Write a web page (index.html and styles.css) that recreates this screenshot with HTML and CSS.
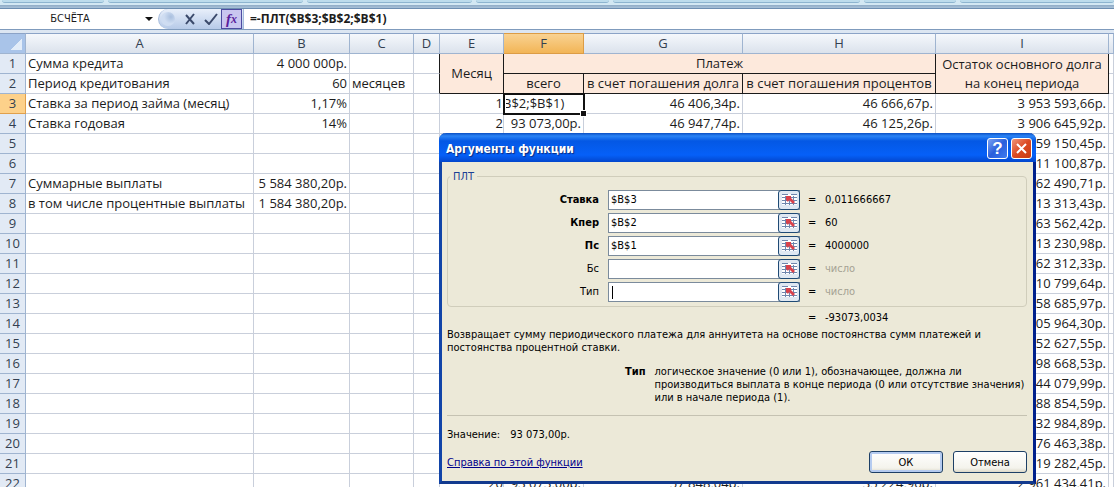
FILE: index.html
```
<!DOCTYPE html>
<html lang="ru">

<head>
    <meta charset="UTF-8">
    <meta name="viewport" content="width=device-width, initial-scale=1.0">
    <title>Расчёт кредита</title>
    <link rel="stylesheet" href="styles.css">
</head>

<body>
    <!-- Icon shared by the range pickers -->
    <svg width="0" height="0" class="sprite" aria-hidden="true">
        <symbol id="range-icon" viewBox="0 0 17 13">
            <rect x="1" y="1" width="15" height="11" fill="#fff" />
            <path d="M1 1.5h6M10 1.5h6M1 4.5h15M1 7.5h15M1 10.500h15M4.500 3v9M8.500 3v9M12.500 3v9" stroke="#6f86ad" fill="none" />
            <path d="M5 3h5v2l4 4-2 2-4-4-1 2-2-2z" fill="#d9424c" />
        </symbol>
    </svg>

    <div class="ribbon-edge"><span></span><span></span><span></span><span></span><span></span><span></span><span></span></div>

    <div class="formula-bar">
        <div class="name-box">
            <input type="text" class="name-input" value="БСЧЁТА" aria-label="Имя">
            <button class="name-arrow" aria-label="Список имён"></button>
        </div>
        <div class="formula-tools">
            <span class="knob"></span>
            <button aria-label="Отмена ввода">
                <svg width="12" height="12" viewBox="0 0 12 12"><path d="M2 2l8 9M10 1L2 11" stroke="#3b4a6b" stroke-width="2" fill="none" /></svg>
            </button>
            <button aria-label="Ввод">
                <svg width="14" height="12" viewBox="0 0 14 12"><path d="M1 7l4 4 8-10" stroke="#3b4a6b" stroke-width="2" fill="none" /></svg>
            </button>
            <button class="fx" aria-label="Вставить функцию">f<sub>x</sub></button>
        </div>
        <input type="text" class="formula-input" value="=-ПЛТ($B$3;$B$2;$B$1)" aria-label="Строка формул">
    </div>

    <main class="workbook">
        <table class="sheet">
            <colgroup>
                <col class="col-num"><col class="col-a"><col class="col-b"><col class="col-c"><col class="col-d"><col class="col-c"><col class="col-f"><col class="col-g"><col class="col-h"><col class="col-i"><col>
            </colgroup>
            <thead>
                <tr><th class="corner"></th><th>A</th><th>B</th><th>C</th><th>D</th><th>E</th><th class="active">F</th><th>G</th><th>H</th><th>I</th><th></th></tr>
            </thead>
            <tbody>
                <tr><th>1</th><td>Сумма кредита</td><td class="num">4 000 000р.</td><td></td><td class="before"></td><td class="head" rowspan="2">Месяц</td><td class="head" colspan="3">Платеж</td><td class="head double" rowspan="2">Остаток основного долга<br>на конец периода</td><td></td></tr>
                <tr><th>2</th><td>Период кредитования</td><td class="num">60</td><td>месяцев</td><td class="before"></td><td class="head">всего</td><td class="head">в счет погашения долга</td><td class="head">в счет погашения процентов</td><td></td></tr>
                <tr><th class="active">3</th><td>Ставка за период займа (месяц)</td><td class="num">1,17%</td><td></td><td></td><td class="month">1</td><td class="editing"><input type="text" value="B$2;$B$1)" aria-label="F3"></td><td class="num">46 406,34р.</td><td class="num">46 666,67р.</td><td class="num">3 953 593,66р.</td><td></td></tr>
                <tr><th>4</th><td>Ставка годовая</td><td class="num">14%</td><td></td><td></td><td class="month">2</td><td class="num">93 073,00р.</td><td class="num">46 947,74р.</td><td class="num">46 125,26р.</td><td class="num">3 906 645,92р.</td><td></td></tr>
                <tr><th>5</th><td></td><td></td><td></td><td></td><td></td><td></td><td></td><td></td><td class="num">3 859 150,45р.</td><td></td></tr>
                <tr><th>6</th><td></td><td></td><td></td><td></td><td></td><td></td><td></td><td></td><td class="num">3 811 100,87р.</td><td></td></tr>
                <tr><th>7</th><td>Суммарные выплаты</td><td class="num">5 584 380,20р.</td><td></td><td></td><td></td><td></td><td></td><td></td><td class="num">3 762 490,71р.</td><td></td></tr>
                <tr><th>8</th><td>в том числе процентные выплаты</td><td class="num">1 584 380,20р.</td><td></td><td></td><td></td><td></td><td></td><td></td><td class="num">3 713 313,43р.</td><td></td></tr>
                <tr><th>9</th><td></td><td></td><td></td><td></td><td></td><td></td><td></td><td></td><td class="num">3 663 562,42р.</td><td></td></tr>
                <tr><th>10</th><td></td><td></td><td></td><td></td><td></td><td></td><td></td><td></td><td class="num">3 613 230,98р.</td><td></td></tr>
                <tr><th>11</th><td></td><td></td><td></td><td></td><td></td><td></td><td></td><td></td><td class="num">3 562 312,33р.</td><td></td></tr>
                <tr><th>12</th><td></td><td></td><td></td><td></td><td></td><td></td><td></td><td></td><td class="num">3 510 799,64р.</td><td></td></tr>
                <tr><th>13</th><td></td><td></td><td></td><td></td><td></td><td></td><td></td><td></td><td class="num">3 458 685,97р.</td><td></td></tr>
                <tr><th>14</th><td></td><td></td><td></td><td></td><td></td><td></td><td></td><td></td><td class="num">3 405 964,30р.</td><td></td></tr>
                <tr><th>15</th><td></td><td></td><td></td><td></td><td></td><td></td><td></td><td></td><td class="num">3 352 627,55р.</td><td></td></tr>
                <tr><th>16</th><td></td><td></td><td></td><td></td><td></td><td></td><td></td><td></td><td class="num">3 298 668,53р.</td><td></td></tr>
                <tr><th>17</th><td></td><td></td><td></td><td></td><td></td><td></td><td></td><td></td><td class="num">3 244 079,99р.</td><td></td></tr>
                <tr><th>18</th><td></td><td></td><td></td><td></td><td></td><td></td><td></td><td></td><td class="num">3 188 854,59р.</td><td></td></tr>
                <tr><th>19</th><td></td><td></td><td></td><td></td><td></td><td></td><td></td><td></td><td class="num">3 132 984,89р.</td><td></td></tr>
                <tr><th>20</th><td></td><td></td><td></td><td></td><td></td><td></td><td></td><td></td><td class="num">3 076 463,38р.</td><td></td></tr>
                <tr><th>21</th><td></td><td></td><td></td><td></td><td></td><td></td><td></td><td></td><td class="num">3 019 282,45р.</td><td></td></tr>
                <tr><th>22</th><td></td><td></td><td></td><td></td><td class="month">20</td><td class="num">93 073,00р.</td><td class="num">57 848,04р.</td><td class="num">35 224,96р.</td><td class="num">2 961 434,41р.</td><td></td></tr>
            </tbody>
        </table>

        <form class="dialog" role="dialog" aria-labelledby="dialog-title">
            <div class="title-bar">
                <h1 id="dialog-title">Аргументы функции</h1>
                <button type="button" class="help" aria-label="Справка">?</button>
                <button type="button" class="close" aria-label="Закрыть">
                    <svg width="13" height="13" viewBox="0 0 13 13"><path d="M2 2l9 9M11 2l-9 9" stroke="#fff" stroke-width="2" /></svg>
                </button>
            </div>

            <div class="dialog-body">
                <fieldset>
                    <legend>ПЛТ</legend>
                    <div class="arg">
                        <label class="required" for="rate">Ставка</label>
                        <div class="ref"><input type="text" id="rate" value="$B$3"><button type="button" aria-label="Выбрать диапазон"><svg width="17" height="13"><use href="#range-icon" /></svg></button></div>
                        <span>=</span><output for="rate">0,011666667</output>
                    </div>
                    <div class="arg">
                        <label class="required" for="nper">Кпер</label>
                        <div class="ref"><input type="text" id="nper" value="$B$2"><button type="button" aria-label="Выбрать диапазон"><svg width="17" height="13"><use href="#range-icon" /></svg></button></div>
                        <span>=</span><output for="nper">60</output>
                    </div>
                    <div class="arg">
                        <label class="required" for="pv">Пс</label>
                        <div class="ref"><input type="text" id="pv" value="$B$1"><button type="button" aria-label="Выбрать диапазон"><svg width="17" height="13"><use href="#range-icon" /></svg></button></div>
                        <span>=</span><output for="pv">4000000</output>
                    </div>
                    <div class="arg">
                        <label for="fv">Бс</label>
                        <div class="ref"><input type="text" id="fv"><button type="button" aria-label="Выбрать диапазон"><svg width="17" height="13"><use href="#range-icon" /></svg></button></div>
                        <span>=</span><output class="hint" for="fv">число</output>
                    </div>
                    <div class="arg">
                        <label for="type">Тип</label>
                        <div class="ref"><input type="text" id="type" class="caret"><button type="button" aria-label="Выбрать диапазон"><svg width="17" height="13"><use href="#range-icon" /></svg></button></div>
                        <span>=</span><output class="hint" for="type">число</output>
                    </div>
                </fieldset>

                <div class="arg total"><span>=</span><output>-93073,0034</output></div>
                <p class="about">Возвращает сумму периодического платежа для аннуитета на основе постоянства сумм платежей и постоянства процентной ставки.</p>
                <dl class="arg-help">
                    <dt>Тип</dt>
                    <dd>логическое значение (0 или 1), обозначающее, должна ли производиться выплата в конце периода (0 или отсутствие значения) или в начале периода (1).</dd>
                </dl>
                <div class="result"><span>Значение:</span><output>93 073,00р.</output></div>
                <div class="actions">
                    <a href="#help">Справка по этой функции</a>
                    <button type="submit" class="default">ОК</button>
                    <button type="button">Отмена</button>
                </div>
            </div>
        </form>
    </main>
</body>

</html>
```
FILE: styles.css
```
* {
    margin: 0;
    padding: 0;
    box-sizing: border-box;
}

body {
    display: flex;
    flex-direction: column;
    height: 100vh;
    overflow: hidden;
    background: #fff;
    color: #1c1c1c;
    font: 13px/20px "Open Sans", "Noto Sans", sans-serif;
}

button,
input {
    font: inherit;
    color: inherit;
    border: none;
    outline: none;
    background: none;
}

.sprite {
    position: absolute;
}

/* Bottom edge of the ribbon */
.ribbon-edge {
    display: flex;
    gap: 4px;
    flex: none;
    height: 9px;
    padding: 0 0 5px 2px;
    background: linear-gradient(#d3e8f3 5px, #8fabc6 5px, #a9c2d8);
    border-bottom: 1px solid #6e8fb2;
}

.ribbon-edge span {
    flex: 102 1 0;
    background: #bddcec;
    border-bottom: 1px solid #8db4cf;
    border-radius: 0 0 3px 3px;
}

.ribbon-edge span:nth-child(2) {
    flex-grow: 195;
}

.ribbon-edge span:nth-child(3) {
    flex-grow: 165;
}

.ribbon-edge span:nth-child(4) {
    flex-grow: 134;
}

.ribbon-edge span:nth-child(5) {
    flex-grow: 247;
}

.ribbon-edge span:nth-child(6) {
    flex-grow: 92;
}

.ribbon-edge span:last-child {
    flex-grow: 154;
}

/* Formula bar */
.formula-bar {
    display: flex;
    flex: none;
    height: 21px;
    border-bottom: 1px solid #7f9bbd;
}

.name-box {
    display: flex;
    width: 158px;
}

.name-input {
    flex: 1;
    min-width: 0;
    text-align: center;
    font: 11px/20px "DejaVu Sans Condensed", sans-serif;
}

.name-arrow {
    width: 18px;
}

.name-arrow::before {
    content: "";
    display: block;
    margin: 0 auto;
    width: 0;
    border: 4px solid transparent;
    border-top-color: #111;
    border-bottom: 0;
}

.formula-tools {
    display: flex;
    align-items: center;
    width: 86px;
    padding-left: 2px;
    border: 1px solid #a5bbdc;
    border-width: 0 1px 0 1px;
    border-radius: 10px 0 0 10px;
    background: linear-gradient(#e8effa, #b6cae8);
}

.formula-tools button {
    display: flex;
    flex: none;
    align-items: center;
    justify-content: center;
    width: 21px;
    height: 20px;
}

.knob {
    width: 14px;
    height: 14px;
    margin-right: 4px;
    border-radius: 50%;
    background: radial-gradient(circle at 70% 35%, #a9bfde, #cfddf2 50%);
}

.formula-tools .fx {
    border: 1px solid #4d4ca0;
    background: #c9c6f0;
    color: #5b1f9c;
    font: italic bold 15px/18px "Liberation Serif", serif;
}

.fx sub {
    font-size: 12px;
}

.formula-input {
    flex: 1;
    padding-left: 6px;
    font-weight: bold;
    font-size: 12px;
}

/* Worksheet */
.workbook {
    position: relative;
    flex: 1;
    min-height: 0;
    overflow: hidden;
    padding-top: 3px;
    background: #dce6f2;
}

.sheet {
    width: 100%;
    table-layout: fixed;
    border-collapse: separate;
    border-spacing: 0;
    background: #fff;
}

.col-num { width: 26px; }
.col-a { width: 228px; }
.col-b { width: 96px; }
.col-c { width: 64px; }
.col-d { width: 26px; }
.col-f { width: 80px; }
.col-g { width: 159px; }
.col-h { width: 193px; }
.col-i { width: 173px; }

.sheet th,
.sheet td {
    height: 20px;
    line-height: 19px;
    white-space: nowrap;
    border: solid #c9cfdb;
    border-width: 0 1px 1px 0;
}

.sheet td {
    padding-left: 2px;
}

.sheet th {
    font-weight: normal;
    color: #333f50;
    background: #e2eaf5;
    border-color: #9fb4d0;
}

.sheet thead th {
    height: 21px;
    background: linear-gradient(#f5f8fc, #dbe2ec);
    border-top: 1px solid #8ba3c7;
}

.sheet thead .corner {
    background: linear-gradient(135deg, transparent 50%, #e3edf9 50%) 11px 5px / 11px 11px no-repeat, #a9c4e9;
}

.sheet thead .active {
    background: linear-gradient(#f9d292, #f2b556);
    border-color: #dc9c45;
}

.sheet tbody .active {
    background: #fdd18a;
    border-color: #e0a04c;
}

.sheet .num {
    padding-right: 2px;
    text-align: right;
}

.sheet .month {
    text-align: right;
}

.sheet .head {
    padding: 0;
    text-align: center;
    background: #fde9dc;
    border-color: #1a1a1a;
}

.sheet .before {
    border-right-color: #1a1a1a;
}

.sheet .editing {
    position: relative;
    padding: 0;
    outline: 2px solid #111;
    outline-offset: -1px;
}

/* Fill handle */
.editing::after {
    content: "";
    position: absolute;
    right: -3px;
    bottom: -3px;
    width: 5px;
    height: 5px;
    background: #111;
    box-shadow: 0 0 0 1px #fff;
}

.editing input {
    display: block;
    width: 100%;
    height: 19px;
    padding-left: 2px;
    text-indent: -3px;
}

/* Function arguments window */
.dialog {
    position: absolute;
    left: 439px;
    top: 103px;
    width: 597px;
    border: 3px solid #1144a8;
    border-top: 0;
    border-right-color: #00208c;
    border-bottom-color: #123a8e;
    border-radius: 7px 7px 0 0;
    background: #ece9d8;
    color: #000;
    font: 11px/13px "DejaVu Sans Condensed", sans-serif;
}

.title-bar {
    display: flex;
    align-items: center;
    gap: 3px;
    height: 29px;
    margin: 0 -3px;
    padding: 2px 4px 0 7px;
    border-radius: 7px 7px 0 0;
    background: linear-gradient(#0a4fc4, #2b84f5 3px, #0458e4 8px, #0560f8 22px, #0346cc);
}

.title-bar h1 {
    flex: 1;
    color: #fff;
    font: bold 12px/20px "DejaVu Sans Condensed", sans-serif;
    text-shadow: 1px 1px 1px #0a2a80;
}

.title-bar button {
    display: flex;
    align-items: center;
    justify-content: center;
    width: 21px;
    height: 21px;
    border: 1px solid #fff;
    border-radius: 3px;
    background: linear-gradient(135deg, #7ba2f2, #2a5fdc 50%, #3f7cf0);
    color: #fff;
    font: bold 17px/19px "Liberation Sans", sans-serif;
}

.title-bar .close {
    background: linear-gradient(135deg, #f0967a, #dc4a22 50%, #c83c14);
}

.dialog-body {
    padding: 8px 6px 8px 5px;
}

.dialog fieldset {
    height: 137px;
    padding: 5px 0 0;
    border: 1px solid #d0cdbb;
    border-radius: 4px;
}

.dialog legend {
    margin-left: 2px;
    padding: 0 3px;
    color: #1c3f94;
}

.arg {
    display: flex;
    align-items: center;
    height: 23px;
}

.arg label {
    width: 151px;
    text-align: right;
}

.arg .required {
    font-weight: bold;
}

.arg > span {
    width: 17px;
}

.arg .hint {
    color: #a5a293;
}

.ref {
    display: flex;
    width: 192px;
    height: 20px;
    margin: 0 8px 0 9px;
    border: 1px solid #7b8b9c;
    background: #fff;
}

.ref input {
    flex: 1;
    min-width: 0;
    padding-left: 2px;
}

.ref .caret {
    background: linear-gradient(#000, #000) 3px 3px / 1px 13px no-repeat;
}

.ref button {
    display: flex;
    align-items: center;
    justify-content: center;
    width: 22px;
    height: 20px;
    margin: -1px;
    border: 1px solid #1f4a75;
    border-radius: 3px;
    background: #dfe8f2;
}

.total {
    height: 21px;
    padding-left: 361px;
}

.about {
    padding-right: 40px;
}

.arg-help {
    display: flex;
    gap: 9px;
    padding: 11px 0 11px 178px;
    border-bottom: 1px solid #c5c2b2;
}

.arg-help dt {
    font-weight: bold;
}

.result {
    display: flex;
    gap: 10px;
    padding: 12px 0 10px;
}

.actions {
    display: flex;
    align-items: center;
    gap: 10px;
}

.actions a {
    flex: 1;
    color: #00008b;
}

.actions button {
    width: 74px;
    height: 22px;
    border: 1px solid #1d3f66;
    border-radius: 3px;
    background: linear-gradient(#fff, #f4f3ec 80%, #dcd8c8);
}

.actions .default {
    box-shadow: inset 0 0 0 2px #b5cbf0;
}
```
